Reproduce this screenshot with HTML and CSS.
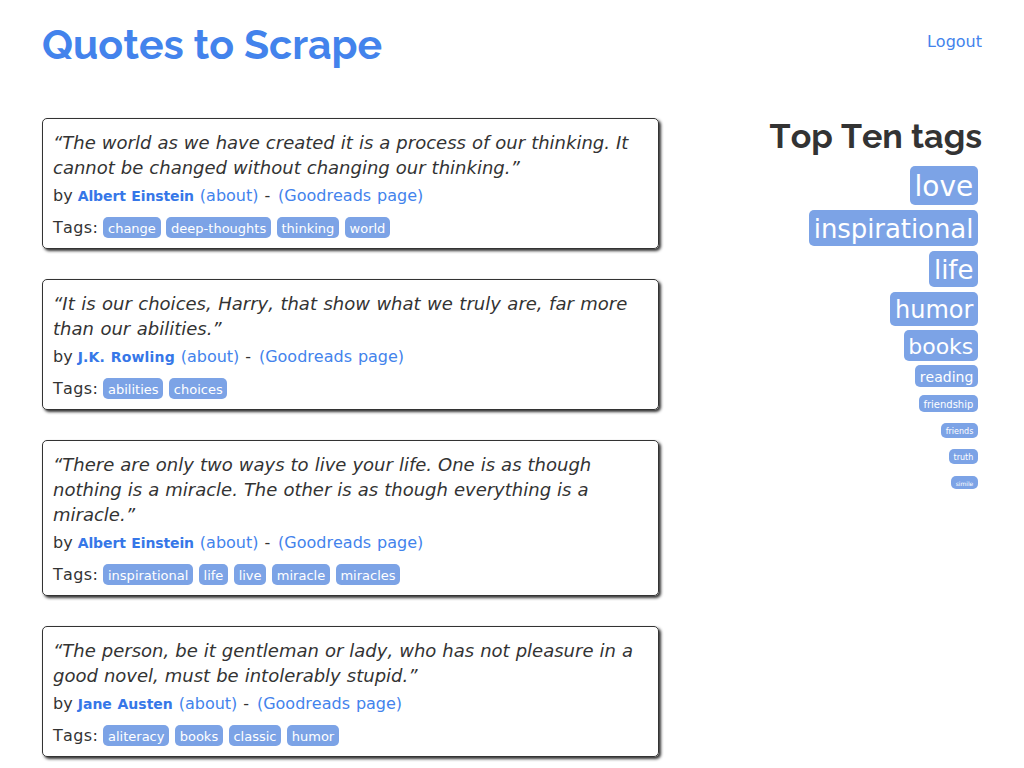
FILE: index.html
```html
<!DOCTYPE html>
<html lang="en">
<head>
<meta charset="UTF-8">
<title>Quotes to Scrape</title>
<link rel="stylesheet" href="styles.css">
</head>
<body>
<div class="container">
  <header class="header">
    <h1><a href="#">Quotes to Scrape</a></h1>
    <p class="login"><a href="#">Logout</a></p>
  </header>
  <div class="row">
    <main class="quotes">
      <div class="quote">
        <span class="text">“The world as we have created it is a process of our thinking. It cannot be changed without changing our thinking.”</span>
        <div class="byline">by <small class="author tight">Albert Einstein</small> <a href="#">(about)</a> - <a class="goodreads" href="#">(Goodreads page)</a></div>
        <div class="tags"><span class="label">Tags:</span> <a class="tag" href="#">change</a> <a class="tag" href="#">deep-thoughts</a> <a class="tag" href="#">thinking</a> <a class="tag" href="#">world</a></div>
      </div>
      <div class="quote">
        <span class="text loose">“It is our choices, Harry, that show what we truly are, far more than our abilities.”</span>
        <div class="byline">by <small class="author wide">J.K. Rowling</small> <a href="#">(about)</a> - <a class="goodreads" href="#">(Goodreads page)</a></div>
        <div class="tags"><span class="label">Tags:</span> <a class="tag" href="#">abilities</a> <a class="tag" href="#">choices</a></div>
      </div>
      <div class="quote">
        <span class="text">“There are only two ways to live your life. One is as though nothing is a miracle. The other is as though everything is a miracle.”</span>
        <div class="byline">by <small class="author tight">Albert Einstein</small> <a href="#">(about)</a> - <a class="goodreads" href="#">(Goodreads page)</a></div>
        <div class="tags"><span class="label">Tags:</span> <a class="tag" href="#">inspirational</a> <a class="tag" href="#">life</a> <a class="tag" href="#">live</a> <a class="tag" href="#">miracle</a> <a class="tag" href="#">miracles</a></div>
      </div>
      <div class="quote">
        <span class="text">“The person, be it gentleman or lady, who has not pleasure in a good novel, must be intolerably stupid.”</span>
        <div class="byline">by <small class="author">Jane Austen</small> <a href="#">(about)</a> - <a class="goodreads" href="#">(Goodreads page)</a></div>
        <div class="tags"><span class="label">Tags:</span> <a class="tag" href="#">aliteracy</a> <a class="tag" href="#">books</a> <a class="tag" href="#">classic</a> <a class="tag" href="#">humor</a></div>
      </div>
    </main>
    <aside class="tags-box">
      <h2>Top Ten tags</h2>
      <span class="tag-item"><a class="tag size-28" href="#">love</a></span>
      <span class="tag-item"><a class="tag size-26" href="#">inspirational</a></span>
      <span class="tag-item"><a class="tag size-26" href="#">life</a></span>
      <span class="tag-item"><a class="tag size-24" href="#">humor</a></span>
      <span class="tag-item"><a class="tag size-22" href="#">books</a></span>
      <span class="tag-item"><a class="tag size-14" href="#">reading</a></span>
      <span class="tag-item"><a class="tag size-10" href="#">friendship</a></span>
      <span class="tag-item"><a class="tag size-8" href="#">friends</a></span>
      <span class="tag-item"><a class="tag size-8" href="#">truth</a></span>
      <span class="tag-item"><a class="tag size-6" href="#">simile</a></span>
    </aside>
  </div>
</div>
</body>
</html>
```
FILE: styles.css
```css
* { box-sizing: border-box; }
html { overflow: hidden; height: 768px; }
body {
  margin: 0;
  height: 768px;
  overflow: hidden;
  background: #fff;
  color: #333;
  font: 16px/22px Verdana, "DejaVu Sans", sans-serif;
  font-kerning: none;
}
a { color: #4383ec; text-decoration: none; }
.container { width: 940px; margin: 0 auto; }
.header {
  display: flex;
  justify-content: space-between;
  height: 118px;
  padding-top: 20px;
}
h1, h2 { margin: 0; font-family: Raleway, Lato, sans-serif; font-weight: 700; }
h1 { font-size: 41px; line-height: 50px; }
.login { margin: 11px 0 0; }
.row { display: flex; justify-content: space-between; }
.quotes { width: 617px; }
.quote {
  margin-bottom: 30px;
  padding: 11px 10px 9px;
  border: 1px solid #333;
  border-radius: 5px;
  box-shadow: 2px 2px 3px #333;
}
.text {
  display: block;
  margin-bottom: 5px;
  font-size: 18px;
  line-height: 25px;
  font-style: italic;
  word-spacing: 0.3px;
}
.loose { word-spacing: 0.75px; }
.byline { word-spacing: 0.8px; }
.author {
  margin-left: -0.8px;
  color: #3677e8;
  font-size: 14px;
  line-height: 16px;
  font-weight: 700;
}
.tight { letter-spacing: -0.12px; }
.wide { letter-spacing: 0.15px; }
.goodreads { margin-left: 2px; }
.tags { margin-top: 10px; }
.label { letter-spacing: 0.35px; }
.tag {
  padding: 4px 4.7px 2px;
  border-radius: 5px;
  background: #7ca3e6;
  color: #fff;
  font-size: 13px;
  line-height: 18px;
}
.tags .tag + .tag { margin-left: 0.8px; }
.tags-box { width: 293px; text-align: right; }
h2 { font-size: 34px; line-height: 36px; margin-bottom: 13px; }
.tag-item { display: block; margin: 4px; }
.size-28 { font-size: 28px; line-height: 40px; }
.size-26 { font-size: 26px; line-height: 37px; letter-spacing: -0.08px; }
.size-24 { font-size: 24px; line-height: 34px; }
.size-22 { font-size: 22px; line-height: 31px; }
.size-14 { font-size: 14px; line-height: 20px; }
.size-10 { font-size: 10px; line-height: 14px; }
.size-8 { font-size: 8px; line-height: 11px; }
.size-6 { font-size: 6px; line-height: 8px; }
```
